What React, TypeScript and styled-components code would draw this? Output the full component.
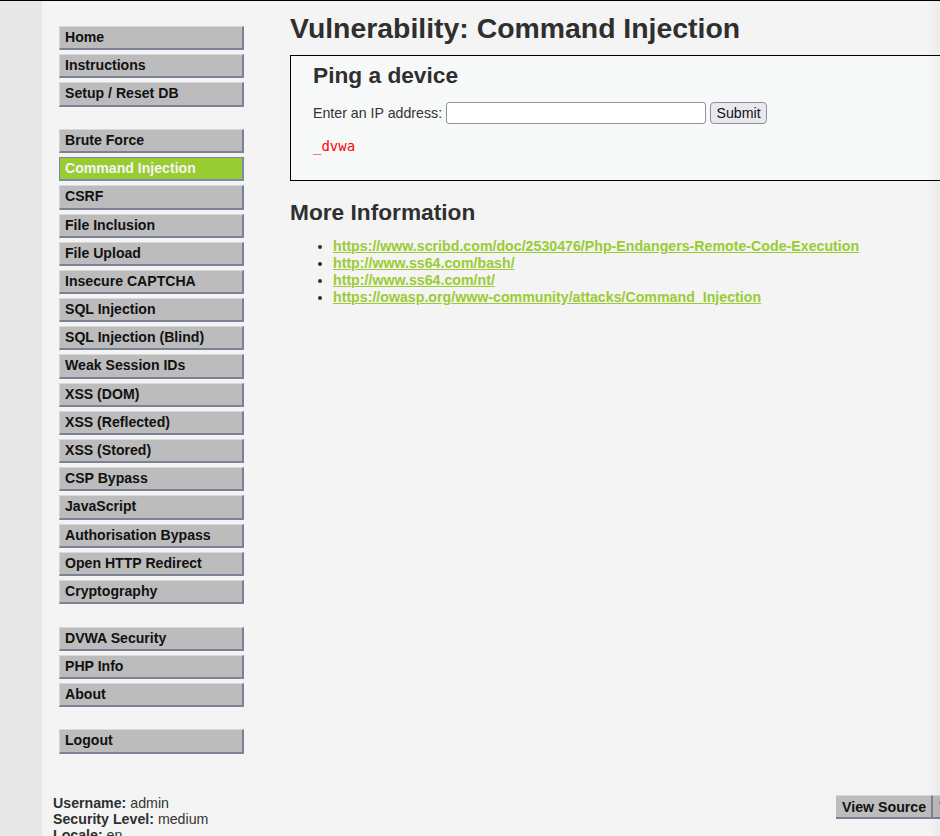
import React from "react";
import styled, { createGlobalStyle } from "styled-components";

const Global = createGlobalStyle`
  html, body { margin: 0; padding: 0; }
  body {
    background: #e7e7e7;
    font-family: "Liberation Sans", Arial, sans-serif;
    font-size: 14.2px;
    color: #2f2f2f;
    overflow: hidden;
  }
`;

const Page = styled.div`
  display: flex;
  height: 836px;
  border-top: 1px solid #000;
  box-sizing: border-box;
  overflow: hidden;
`;

const Strip = styled.div`
  width: 42px;
  flex: none;
  background: #e7e7e7;
`;

const Main = styled.div`
  flex: 1;
  min-width: 0;
  background: #f4f4f4;
  display: flex;
  flex-direction: column;
  overflow: hidden;
  position: relative;
  &::after {
    content: "";
    position: absolute;
    top: 0;
    right: 0;
    bottom: 0;
    width: 12px;
    background: linear-gradient(to right, rgba(0, 0, 0, 0), rgba(0, 0, 0, 0.035));
    pointer-events: none;
  }
`;

const Body = styled.div`
  display: flex;
  height: 794px;
  flex: none;
`;

const Menu = styled.nav`
  width: 185px;
  flex: none;
  margin: 25px 0 0 17px;
  display: flex;
  flex-direction: column;
  gap: 22.4px;
`;

const Group = styled.ul`
  list-style: none;
  margin: 0;
  padding: 0;
  display: flex;
  flex-direction: column;
  gap: 4px;
`;

const Item = styled.li<{ $active?: boolean }>`
  display: block;
  box-sizing: border-box;
  height: 24.2px;
  line-height: 21.2px;
  padding: 0 5px;
  font-weight: bold;
  font-size: 14.1px;
  color: ${(p) => (p.$active ? "#f4f4f4" : "#111")};
  background: ${(p) => (p.$active ? "#99cc33" : "#bcbcbc")};
  border-top: 1px solid #d9d9d9;
  border-left: 1px solid #d2d2d2;
  border-right: 2px solid #7b8294;
  border-bottom: 2px solid #7b8294;
  white-space: nowrap;
  ${(p) => (p.$active ? "border-color: #7b8aa8;" : "")}
`;

const Content = styled.div`
  margin-left: 46px;
  flex: 1;
  min-width: 0;
`;

const H1 = styled.h1`
  margin: 10px 0 0 0;
  font-size: 28.4px;
  line-height: 34px;
  font-weight: bold;
  color: #2f2f2f;
`;

const CodeArea = styled.div`
  margin-top: 10px;
  margin-right: -40px;
  border: 1px solid #000;
  background: #f7f8f8;
  padding: 5px 22px 0 22px;
  height: 126px;
  box-sizing: border-box;
`;

const H2 = styled.h2`
  margin: 0;
  font-size: 22.7px;
  line-height: 28px;
  font-weight: bold;
  color: #2f2f2f;
`;

const Form = styled.form`
  display: flex;
  align-items: center;
  margin-top: 13px;
  font-size: 14.2px;
  color: #333;
`;

const Input = styled.input`
  margin-left: 4px;
  width: 260px;
  height: 22px;
  box-sizing: border-box;
  border: 1px solid #8f8f9d;
  border-radius: 3px;
  background: #fff;
  padding: 0 4px;
`;

const Button = styled.button`
  margin-left: 4px;
  height: 22px;
  width: 57px;
  box-sizing: border-box;
  border: 1px solid #8f8f9d;
  border-radius: 4px;
  background: #e9e9ed;
  font-family: "Liberation Sans", Arial, sans-serif;
  font-size: 14.2px;
  color: #111;
  padding: 0;
`;

const Output = styled.pre`
  margin: 14px 0 0 0;
  font-family: "DejaVu Sans Mono", monospace;
  font-size: 14px;
  line-height: 17px;
  color: #f00;
`;

const H2b = styled(H2)`
  margin-top: 17px;
`;

const Links = styled.ul`
  margin: 12px 0 0 0;
  padding-left: 43px;
  font-size: 14.2px;
  line-height: 17px;
`;

const LinkItem = styled.li`
  color: #2f2f2f;
`;

const A = styled.a`
  color: #99cc33;
  font-weight: bold;
  text-decoration: underline;
`;

const Footer = styled.div`
  display: flex;
  justify-content: space-between;
  align-items: flex-start;
  padding: 0 0 0 11px;
`;

const Info = styled.div`
  font-size: 14.2px;
  line-height: 16px;
  color: #333;
`;

const B = styled.b`
  color: #2f2f2f;
`;

const SourceButtons = styled.div`
  display: flex;
  width: 104px;
  flex: none;
  overflow: hidden;
`;

const SourceBtn = styled.span`
  display: block;
  flex: none;
  box-sizing: border-box;
  height: 24px;
  line-height: 22px;
  padding: 0 5px 0 6px;
  font-weight: bold;
  font-size: 14.2px;
  color: #111;
  background: #bcbcbc;
  border-top: 1px solid #d9d9d9;
  border-right: 2px solid #7b8294;
  border-bottom: 2px solid #7b8294;
  white-space: nowrap;
`;

const menu = [
  ["Home", "Instructions", "Setup / Reset DB"],
  [
    "Brute Force",
    "Command Injection",
    "CSRF",
    "File Inclusion",
    "File Upload",
    "Insecure CAPTCHA",
    "SQL Injection",
    "SQL Injection (Blind)",
    "Weak Session IDs",
    "XSS (DOM)",
    "XSS (Reflected)",
    "XSS (Stored)",
    "CSP Bypass",
    "JavaScript",
    "Authorisation Bypass",
    "Open HTTP Redirect",
    "Cryptography",
  ],
  ["DVWA Security", "PHP Info", "About"],
  ["Logout"],
];

const links = [
  "https://www.scribd.com/doc/2530476/Php-Endangers-Remote-Code-Execution",
  "http://www.ss64.com/bash/",
  "http://www.ss64.com/nt/",
  "https://owasp.org/www-community/attacks/Command_Injection",
];

export default function App() {
  return (
    <>
      <Global />
      <Page>
        <Strip />
        <Main>
          <Body>
            <Menu>
              {menu.map((g, i) => (
                <Group key={i}>
                  {g.map((m) => (
                    <Item key={m} $active={m === "Command Injection"}>
                      {m}
                    </Item>
                  ))}
                </Group>
              ))}
            </Menu>
            <Content>
              <H1>Vulnerability: Command Injection</H1>
              <CodeArea>
                <H2>Ping a device</H2>
                <Form onSubmit={(e) => e.preventDefault()}>
                  Enter an IP address:
                  <Input type="text" />
                  <Button type="submit">Submit</Button>
                </Form>
                <Output>_dvwa</Output>
              </CodeArea>
              <H2b>More Information</H2b>
              <Links>
                {links.map((l) => (
                  <LinkItem key={l}>
                    <A href="#">{l}</A>
                  </LinkItem>
                ))}
              </Links>
            </Content>
          </Body>
          <Footer>
            <Info>
              <div>
                <B>Username:</B> admin
              </div>
              <div>
                <B>Security Level:</B> medium
              </div>
              <div>
                <B>Locale:</B> en
              </div>
            </Info>
            <SourceButtons>
              <SourceBtn>View Source</SourceBtn>
              <SourceBtn>View Help</SourceBtn>
            </SourceButtons>
          </Footer>
        </Main>
      </Page>
    </>
  );
}
